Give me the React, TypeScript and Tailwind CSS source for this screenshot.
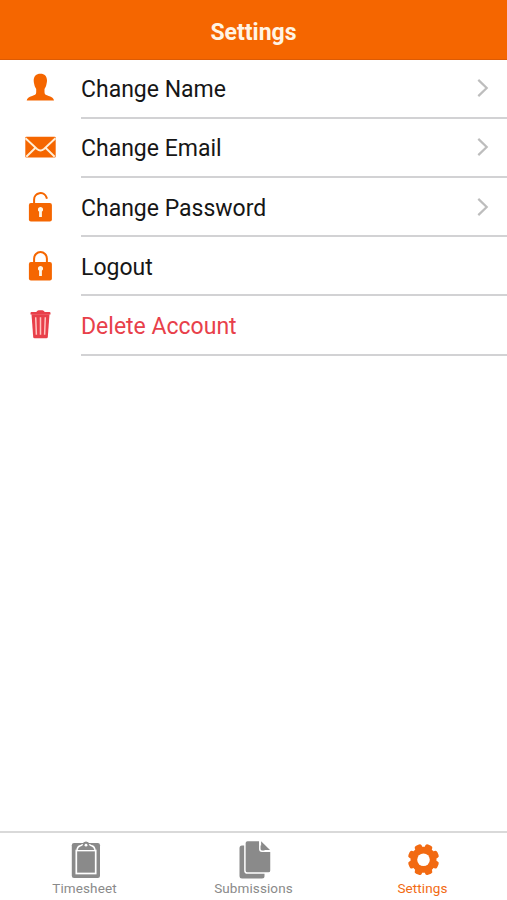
import * as React from "react"

type SettingsItem = {
  id: string
  label: string
  icon: React.ReactNode
  hasChevron: boolean
  danger?: boolean
}

type TabItem = {
  id: string
  label: string
  icon: React.ReactNode
  active?: boolean
}

const UserIcon = () => (
  <svg viewBox="0 0 40 40" className="w-10 h-10" fill="currentColor">
    <path d="M20.400 5.700c4.300 0 6.600 2.600 6.600 6.600 0 1.500-.2 2.400-.5 3.800-.4 2-1 3.600-2 4.900v3.300c0 2.300 1.600 2.900 4.200 3.700 3.200.9 5 2.100 5.300 4.600H6.700c.3-2.500 2.200-3.700 5.400-4.600 2.600-.8 4.100-1.400 4.100-3.700v-3.300c-1-1.300-1.600-2.900-2-4.900-.3-1.400-.5-2.300-.5-3.800 0-4 2.400-6.600 6.700-6.600z" />
  </svg>
)

const MailIcon = () => (
  <svg viewBox="0 0 40 40" className="w-10 h-10">
    <rect x="5.300" y="8.700" width="30.400" height="20.900" rx="1" fill="currentColor" />
    <path
      d="M5.500 10.300 17 21q3.500 3 7 0L35.500 10.300M6.300 28.800l9.200-9M34.700 28.800l-9.200-9"
      fill="none"
      stroke="#ffeed6"
      strokeWidth="1.900"
    />
  </svg>
)

const UnlockIcon = () => (
  <svg viewBox="0 0 40 40" className="w-10 h-10">
    <path
      d="M14.100 17v-4.500a6.400 6.400 0 0 1 12.400-2.200l.4 1.500"
      fill="none"
      stroke="currentColor"
      strokeWidth="2"
    />
    <rect x="8.900" y="15.900" width="23" height="18.500" rx="2" fill="currentColor" />
    <path d="M20.500 20a2.600 2.600 0 0 1 1.400 4.800V30h-2.800v-5.200A2.600 2.600 0 0 1 20.500 20z" fill="#fff6e6" />
  </svg>
)

const LockIcon = () => (
  <svg viewBox="0 0 40 40" className="w-10 h-10">
    <path
      d="M14.100 17v-4.500a6.400 6.400 0 0 1 12.800 0V17"
      fill="none"
      stroke="currentColor"
      strokeWidth="2"
    />
    <rect x="8.900" y="15.900" width="23" height="18.500" rx="2" fill="currentColor" />
    <path d="M20.500 20a2.600 2.600 0 0 1 1.400 4.800V30h-2.800v-5.200A2.600 2.600 0 0 1 20.500 20z" fill="#fff6e6" />
  </svg>
)

const TrashIcon = () => (
  <svg viewBox="0 0 40 40" className="w-10 h-10">
    <path
      d="M16.200 7q1.200-1.700 2.400-1.700h3.800q1.200 0 2.400 1.700h4.700q1 0 1 1v1.500h-20V8q0-1 1-1z"
      fill="currentColor"
    />
    <path d="M11.500 9.300h18l-1.700 22.700q-.1 1.300-1.400 1.300h-11.800q-1.300 0-1.400-1.300z" fill="currentColor" />
    <path
      d="M15.700 12.300l.7 17.500M20.500 12.300v17.500M25.300 12.300l-.7 17.500"
      stroke="#ffc4c0"
      strokeWidth="1.500"
    />
  </svg>
)

const ChevronIcon = () => (
  <svg viewBox="0 0 14 20" className="w-3.5 h-5">
    <path d="M2.300 1.900 10.700 10l-8.400 8.100" fill="none" stroke="#bdbdbd" strokeWidth="2.200" />
  </svg>
)

const ClipboardIcon = () => (
  <svg viewBox="0 0 40 40" className="w-10 h-10">
    <rect x="6.800" y="3" width="28.200" height="35" rx="2.200" fill="currentColor" />
    <rect x="11.300" y="10.500" width="19.400" height="23" fill="currentColor" stroke="#fff" strokeWidth="1.700" />
    <path
      d="M12 9.900q.5-3.400 3.300-4.100 1.800-.4 2.200-1.700Q18.200 1.500 21 1.500t3.500 2.600q.4 1.300 2.200 1.700 2.800.7 3.300 4.100z"
      fill="currentColor"
    />
    <path
      d="M12 9.900q.5-3.400 3.300-4.100 1.800-.4 2.200-1.700M30 9.900q-.5-3.400-3.300-4.100-1.800-.4-2.200-1.700"
      fill="none"
      stroke="#fff"
      strokeWidth="1.500"
    />
    <circle cx="21" cy="5.200" r="1.400" fill="#fff" />
  </svg>
)

const FilesIcon = () => (
  <svg viewBox="0 0 40 40" className="w-10 h-10" fill="currentColor">
    <rect x="5.500" y="5.500" width="25" height="33" rx="2.500" />
    <path
      d="M13.500.4h12.300v8.600q0 2.200 2.200 2.200H37V30.500q0 2.600-2.600 2.600H13.500q-2.600 0-2.600-2.600V3q0-2.600 2.600-2.600z"
      stroke="#fff"
      strokeWidth="1.500"
    />
    <path d="M27.100 1.300 36 9.900h-7.700q-1.200 0-1.200-1.200z" />
  </svg>
)

const GearIcon = () => (
  <svg viewBox="0 0 40 40" className="w-10 h-10">
    <g fill="currentColor">
      <circle cx="20.500" cy="19.700" r="13" />
      {[22.5, 67.5, 112.5, 157.5, 202.5, 247.5, 292.5, 337.5].map((angle) => (
        <rect
          key={angle}
          x="16.700"
          y="4"
          width="7.600"
          height="8"
          rx="2.300"
          transform={`rotate(${angle} 20.500 19.700)`}
        />
      ))}
    </g>
    <circle cx="20.500" cy="19.700" r="6.300" fill="#fff" />
  </svg>
)

const items: SettingsItem[] = [
  { id: "name", label: "Change Name", icon: <UserIcon />, hasChevron: true },
  { id: "email", label: "Change Email", icon: <MailIcon />, hasChevron: true },
  {
    id: "password",
    label: "Change Password",
    icon: <UnlockIcon />,
    hasChevron: true,
  },
  { id: "logout", label: "Logout", icon: <LockIcon />, hasChevron: false },
  {
    id: "delete",
    label: "Delete Account",
    icon: <TrashIcon />,
    hasChevron: false,
    danger: true,
  },
]

const tabs: TabItem[] = [
  { id: "timesheet", label: "Timesheet", icon: <ClipboardIcon /> },
  { id: "submissions", label: "Submissions", icon: <FilesIcon /> },
  { id: "settings", label: "Settings", icon: <GearIcon />, active: true },
]

const SettingsRow = ({ item }: { item: SettingsItem }) => (
  <li
    className={`flex h-[59.25px] ${
      item.danger ? "text-[#e8404a]" : "text-[#f56600]"
    }`}
  >
    <div className="w-[81px] pl-5 pt-[9px] shrink-0">{item.icon}</div>
    <div className="flex-1 flex items-center justify-between pr-[17px] border-b-2 border-[#d2d2d4]">
      <span
        className={`pt-[3px] text-[23px] leading-none ${
          item.danger ? "text-[#e8404a]" : "text-[#161616]"
        }`}
      >
        {item.label}
      </span>
      {item.hasChevron && <ChevronIcon />}
    </div>
  </li>
)

const App = () => {
  return (
    <div className="flex flex-col w-full h-screen bg-white font-['Roboto',sans-serif]">
      <header className="flex items-center justify-center h-[60px] pt-[5px] shrink-0 bg-[#f56600] border-b border-[#dc5b05]">
        <h1 className="text-[23px] font-bold leading-none text-[#fff4e4]">
          Settings
        </h1>
      </header>
      <ul className="flex-1 -mt-[0.6px]">
        {items.map((item) => (
          <SettingsRow key={item.id} item={item} />
        ))}
      </ul>
      <nav className="grid grid-cols-3 h-[69px] shrink-0 border-t-2 border-[#d9d9d9]">
        {tabs.map((tab) => (
          <div
            key={tab.id}
            className={`flex flex-col items-center pt-[7px] ${
              tab.active ? "text-[#f26a12]" : "text-[#8a8a8a]"
            }`}
          >
            {tab.icon}
            <span className="text-[13.5px] leading-4 tracking-[0.1px]">
              {tab.label}
            </span>
          </div>
        ))}
      </nav>
    </div>
  )
}

export default App
